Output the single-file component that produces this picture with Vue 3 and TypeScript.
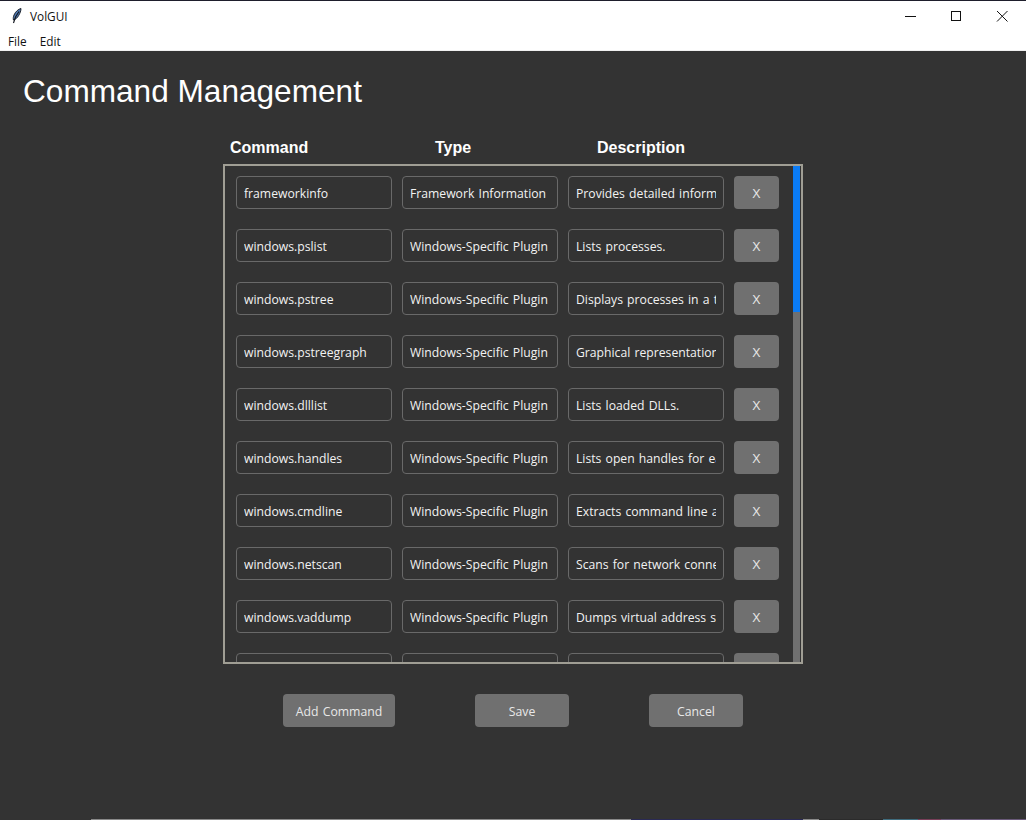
<script setup lang="ts">
interface Row {
  name: string
  kind: string
  desc: string
}

const plugin = 'Windows-Specific Plugin'

const rows: Row[] = [
  { name: 'frameworkinfo', kind: 'Framework Information', desc: 'Provides detailed information' },
  { name: 'windows.pslist', kind: plugin, desc: 'Lists processes.' },
  { name: 'windows.pstree', kind: plugin, desc: 'Displays processes in a tree' },
  { name: 'windows.pstreegraph', kind: plugin, desc: 'Graphical representation of' },
  { name: 'windows.dlllist', kind: plugin, desc: 'Lists loaded DLLs.' },
  { name: 'windows.handles', kind: plugin, desc: 'Lists open handles for each' },
  { name: 'windows.cmdline', kind: plugin, desc: 'Extracts command line arguments' },
  { name: 'windows.netscan', kind: plugin, desc: 'Scans for network connections' },
  { name: 'windows.vaddump', kind: plugin, desc: 'Dumps virtual address space' },
  { name: 'windows.malfind', kind: plugin, desc: 'Finds hidden code' }
]
</script>

<template>
  <div class="window">
    <div class="titlebar">
      <svg class="feather" width="16" height="16" viewBox="0 0 16 16">
        <path d="M12 .5C9.500 1 6.500 3.500 5 7c-.7 1.700-.9 3.300-.6 5 2.200-.6 4-2.200 5.300-4.500C11 5.200 12 2.800 12 .5z" fill="#4f78b0" stroke="#10141c" stroke-width=".9" />
        <path d="M10 3.500 6.500 9 4.500 15" fill="none" stroke="#10141c" stroke-width="1.100" />
      </svg>
      <span class="app-name">VolGUI</span>
      <div class="controls">
        <svg width="46" height="30" viewBox="0 0 46 30"><path d="M18 15.500h11" stroke="#111" fill="none" /></svg>
        <svg width="46" height="30" viewBox="0 0 46 30"><rect x="18.500" y="10.500" width="9" height="9" stroke="#111" fill="none" /></svg>
        <svg width="46" height="30" viewBox="0 0 46 30"><path d="M18 10l10.500 10.500M28.500 10 18 20.500" stroke="#111" fill="none" /></svg>
      </div>
    </div>
    <div class="menubar">
      <span>File</span>
      <span>Edit</span>
    </div>

    <main class="content">
      <h1>Command Management</h1>
      <div class="heads">
        <b class="h-cmd">Command</b>
        <b class="h-type">Type</b>
        <b>Description</b>
      </div>
      <div class="panel">
        <div class="list">
          <div v-for="row in rows" :key="row.name" class="row">
            <input class="field" :value="row.name" readonly />
            <input class="field" :value="row.kind" readonly />
            <input class="field" :value="row.desc" readonly />
            <button class="btn remove">X</button>
          </div>
        </div>
        <div class="scrollbar"><div class="thumb"></div></div>
      </div>
      <div class="actions">
        <button class="btn add">Add Command</button>
        <button class="btn save">Save</button>
        <button class="btn cancel">Cancel</button>
      </div>
    </main>
    <div class="behind"></div>
  </div>
</template>

<style scoped>
.window {
  width: 1026px;
  height: 820px;
  box-sizing: border-box;
  border-top: 1px solid #1e1e2c;
  display: flex;
  flex-direction: column;
  overflow: hidden;
  background: #333333;
}
.titlebar {
  height: 30px;
  background: #fff;
  display: flex;
  align-items: center;
  padding-left: 8px;
  flex: none;
}
.feather {
  margin-left: 1px;
}
.app-name {
  margin-left: 5px;
  font: 11.8px "Open Sans", "Noto Sans", sans-serif;
  color: #111;
}
.controls {
  margin-left: auto;
  display: flex;
  margin-right: 1px;
}
.menubar {
  height: 19px;
  background: #fff;
  border-bottom: 1px solid #f0f0f0;
  flex: none;
  display: flex;
  align-items: center;
  gap: 13px;
  padding-left: 8px;
  font: 11.8px "Open Sans", "Noto Sans", sans-serif;
  color: #111;
}
.content {
  flex: 1;
  padding: 0 0 0 23px;
  font-family: "Liberation Sans", Arial, sans-serif;
  color: #fff;
}
h1 {
  margin: 22px 0 0;
  font-size: 31.6px;
  font-weight: 400;
  line-height: 37px;
}
.heads {
  display: flex;
  margin: 28px 0 0 207px;
  font-size: 16px;
  line-height: 19px;
}
.h-cmd {
  width: 205px;
}
.h-type {
  width: 162px;
}
.panel {
  position: relative;
  width: 580px;
  height: 500px;
  box-sizing: border-box;
  margin: 7px 0 0 200px;
  border: 2px solid #a09e94;
  overflow: hidden;
}
.list {
  display: flex;
  flex-direction: column;
  gap: 20px;
  padding: 10px 0 0 11px;
}
.row {
  display: flex;
  gap: 10px;
  height: 33px;
  flex: none;
}
.field {
  width: 156px;
  height: 33px;
  box-sizing: border-box;
  padding: 2px 7px 0;
  background: #333333;
  border: 1px solid #696969;
  border-radius: 4px;
  outline: 0;
  color: #f2f2f2;
  font: 12.2px "Open Sans", "Noto Sans", sans-serif;
  word-spacing: 1px;
}
.btn {
  height: 33px;
  background: #707070;
  border: 0;
  border-radius: 4px;
  color: #e8e8e8;
  font: 12.25px "Open Sans", "Noto Sans", sans-serif;
  word-spacing: 1px;
  padding: 2px 0 0;
}
.remove {
  width: 45px;
  font-size: 13.5px;
  padding: 0;
}
.scrollbar {
  position: absolute;
  top: 0;
  bottom: 0;
  right: 1px;
  width: 7px;
  background: #707070;
}
.thumb {
  height: 146px;
  background: #0a7bf5;
}
.actions {
  display: flex;
  margin: 30px 0 0 260px;
}
.add {
  width: 112px;
}
.save {
  width: 94px;
  margin-left: 80px;
}
.cancel {
  width: 94px;
  margin-left: 80px;
}
/* sliver of whatever sits behind the window */
.behind {
  height: 1px;
  flex: none;
  background: linear-gradient(
    to right,
    #333 91px,
    #8a8a8a 91px 631px,
    #2a2a55 631px 803px,
    #8a8a8a 803px 819px,
    #2b2b2b 819px 883px,
    #3f6d7f 883px 918px,
    #7a3f5a 918px 941px,
    #6a5a7a 941px 1026px
  );
}
</style>
<style>
html, body {
  background: #333333;
}
</style>
